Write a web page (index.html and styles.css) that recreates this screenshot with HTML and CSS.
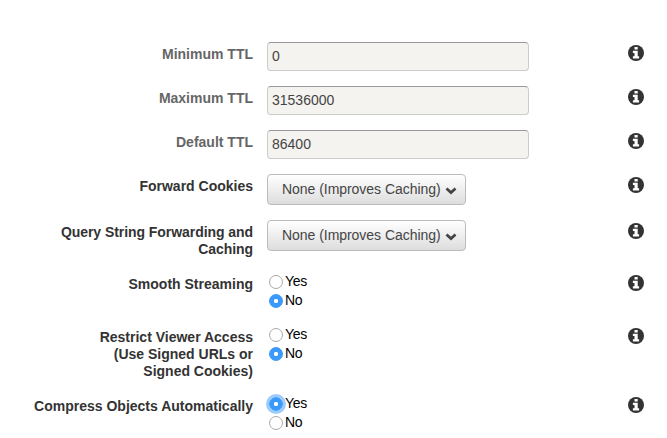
FILE: index.html
```html
<!DOCTYPE html>
<html lang="en">
<head>
<meta charset="utf-8">
<title>Cache settings</title>
<link rel="stylesheet" href="styles.css">
</head>
<body>
<svg class="defs" aria-hidden="true">
  <symbol id="info" viewBox="0 0 16 16">
    <circle cx="8" cy="8" r="8" fill="#333"/>
    <path fill="#fff" d="M6.500 1.900h3.200v2.700H6.500zM4.900 5.800h4.800v5.400h1.400v2.300H4.900v-2.300h1.600V8.100H4.900z"/>
  </symbol>
  <symbol id="chevron" viewBox="0 0 12 8">
    <path d="M1.500 1.500 6 5.600l4.500-4.100" fill="none" stroke="#444" stroke-width="2.700"/>
  </symbol>
</svg>
<form class="settings">
  <div class="row muted">
    <label class="label" for="min">Minimum TTL</label>
    <div class="control"><input class="field" id="min" value="0"></div>
    <svg class="info"><use href="#info"/></svg>
  </div>
  <div class="row muted">
    <label class="label" for="max">Maximum TTL</label>
    <div class="control"><input class="field" id="max" value="31536000"></div>
    <svg class="info"><use href="#info"/></svg>
  </div>
  <div class="row muted">
    <label class="label" for="def">Default TTL</label>
    <div class="control"><input class="field" id="def" value="86400"></div>
    <svg class="info"><use href="#info"/></svg>
  </div>
  <div class="row cookies">
    <div class="label">Forward Cookies</div>
    <div class="control"><button type="button" class="select"><span>None (Improves Caching)</span><svg class="chevron"><use href="#chevron"/></svg></button></div>
    <svg class="info"><use href="#info"/></svg>
  </div>
  <div class="row query">
    <div class="label">Query String Forwarding and<br>Caching</div>
    <div class="control"><button type="button" class="select"><span>None (Improves Caching)</span><svg class="chevron"><use href="#chevron"/></svg></button></div>
    <svg class="info"><use href="#info"/></svg>
  </div>
  <div class="row streaming">
    <div class="label">Smooth Streaming</div>
    <div class="control options">
      <label class="option"><input class="radio" type="radio" name="streaming"><span>Yes</span></label>
      <label class="option"><input class="radio" type="radio" name="streaming" checked><span>No</span></label>
    </div>
    <svg class="info"><use href="#info"/></svg>
  </div>
  <div class="row access">
    <div class="label">Restrict Viewer Access<br>(Use Signed URLs or<br>Signed Cookies)</div>
    <div class="control options">
      <label class="option"><input class="radio" type="radio" name="access"><span>Yes</span></label>
      <label class="option"><input class="radio" type="radio" name="access" checked><span>No</span></label>
    </div>
    <svg class="info"><use href="#info"/></svg>
  </div>
  <div class="row compress">
    <div class="label">Compress Objects Automatically</div>
    <div class="control options">
      <label class="option"><input class="radio focused" type="radio" name="compress" checked><span>Yes</span></label>
      <label class="option"><input class="radio" type="radio" name="compress"><span>No</span></label>
    </div>
    <svg class="info"><use href="#info"/></svg>
  </div>
</form>
</body>
</html>
```
FILE: styles.css
```css
* { box-sizing: border-box; }
body {
  margin: 0;
  height: 438px;
  overflow: hidden;
  background: #fff;
  color: #333;
  font: 14px/17px "Liberation Sans", Arial, sans-serif;
}
.defs { display: none; }
.settings { padding-top: 42px; }
.row {
  display: grid;
  grid-template-columns: 253px 347px 16px;
  column-gap: 14px;
  height: 44px;
}
.cookies { height: 46px; }
.query { height: 52px; }
.streaming { height: 53px; }
.access { height: 69px; }
.label {
  padding-top: 4px;
  text-align: right;
  font-weight: bold;
  white-space: nowrap;
}
.query .label { letter-spacing: -0.06px; }
.muted .label { color: #666; }
.field {
  display: block;
  width: 262px;
  height: 29px;
  padding: 0 4px 2px;
  border: 1px solid #ccc;
  border-top-color: #999;
  border-radius: 4px;
  background: #f4f3ef;
  color: #444;
  font: inherit;
}
.select {
  display: flex;
  align-items: center;
  justify-content: space-between;
  width: 199px;
  height: 31px;
  padding: 0 8px 0 14px;
  border: 1px solid #bbb;
  border-radius: 4px;
  background: linear-gradient(#fff, #ddd);
  color: #444;
  font: inherit;
  letter-spacing: -0.04px;
  white-space: nowrap;
}
.chevron { width: 12px; height: 8px; margin-top: 2px; }
.info { width: 16px; height: 16px; margin-top: 3px; }
.options { color: #000; letter-spacing: -0.3px; }
.option {
  display: flex;
  align-items: center;
  gap: 2px;
  height: 19px;
  padding-left: 2px;
}
.option span { margin-top: -1px; }
.radio {
  appearance: none;
  width: 14px;
  height: 14px;
  margin: 1px 0 0;
  border: 1px solid #aaa;
  border-radius: 50%;
  background: #fff;
}
.radio:checked {
  border-color: #3b99fc;
  background: radial-gradient(circle, #fff 1.8px, #3b99fc 2.5px);
}
.focused { box-shadow: 0 0 0 3px #9bccfd; }
```
